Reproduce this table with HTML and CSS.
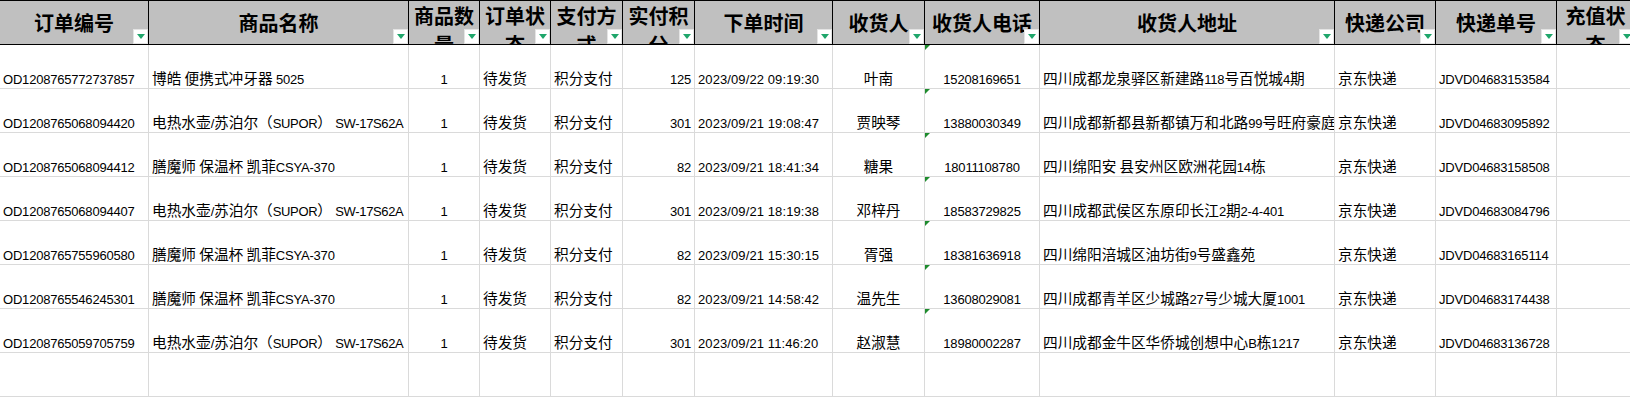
FILE: index.html
```html
<!DOCTYPE html>
<html lang="zh-CN">
<head>
<meta charset="utf-8">
<title>订单列表</title>
<link rel="stylesheet" href="styles.css">
</head>
<body>
<div class="sheet">
  <div class="grid">
    <div class="h">订单编号<span class="filter"><svg width="8" height="5" viewBox="0 0 8 5"><polygon points="0,0 8,0 4,5" /></svg></span></div>
    <div class="h">商品名称<span class="filter"><svg width="8" height="5" viewBox="0 0 8 5"><polygon points="0,0 8,0 4,5" /></svg></span></div>
    <div class="h wrap">商品数量<span class="filter"><svg width="8" height="5" viewBox="0 0 8 5"><polygon points="0,0 8,0 4,5" /></svg></span></div>
    <div class="h wrap">订单状态<span class="filter"><svg width="8" height="5" viewBox="0 0 8 5"><polygon points="0,0 8,0 4,5" /></svg></span></div>
    <div class="h wrap">支付方式<span class="filter"><svg width="8" height="5" viewBox="0 0 8 5"><polygon points="0,0 8,0 4,5" /></svg></span></div>
    <div class="h wrap">实付积分<span class="filter"><svg width="8" height="5" viewBox="0 0 8 5"><polygon points="0,0 8,0 4,5" /></svg></span></div>
    <div class="h">下单时间<span class="filter"><svg width="8" height="5" viewBox="0 0 8 5"><polygon points="0,0 8,0 4,5" /></svg></span></div>
    <div class="h">收货人<span class="filter"><svg width="8" height="5" viewBox="0 0 8 5"><polygon points="0,0 8,0 4,5" /></svg></span></div>
    <div class="h">收货人电话<span class="filter"><svg width="8" height="5" viewBox="0 0 8 5"><polygon points="0,0 8,0 4,5" /></svg></span></div>
    <div class="h">收货人地址<span class="filter"><svg width="8" height="5" viewBox="0 0 8 5"><polygon points="0,0 8,0 4,5" /></svg></span></div>
    <div class="h">快递公司<span class="filter"><svg width="8" height="5" viewBox="0 0 8 5"><polygon points="0,0 8,0 4,5" /></svg></span></div>
    <div class="h">快递单号<span class="filter"><svg width="8" height="5" viewBox="0 0 8 5"><polygon points="0,0 8,0 4,5" /></svg></span></div>
    <div class="h wrap">充值状态<span class="filter"><svg width="8" height="5" viewBox="0 0 8 5"><polygon points="0,0 8,0 4,5" /></svg></span></div>

    <div class="c">OD1208765772737857</div>
    <div class="c"><span class="z">博皓 便携式冲牙器</span> 5025</div>
    <div class="c ctr">1</div>
    <div class="c"><span class="z">待发货</span></div>
    <div class="c"><span class="z">积分支付</span></div>
    <div class="c r">125</div>
    <div class="c dt">2023/09/22 09:19:30</div>
    <div class="c ctr"><span class="z">叶南</span></div>
    <div class="c ctr"><span class="mark"></span>15208169651</div>
    <div class="c"><span class="z">四川成都龙泉驿区新建路</span>118<span class="z">号百悦城</span>4<span class="z">期</span></div>
    <div class="c"><span class="z">京东快递</span></div>
    <div class="c">JDVD04683153584</div>
    <div class="c"></div>

    <div class="c">OD1208765068094420</div>
    <div class="c"><span class="z">电热水壶</span>/<span class="z">苏泊尔（</span><span class="tight">SUPOR</span><span class="z">）</span> <span class="tight">SW-17S62A</span></div>
    <div class="c ctr">1</div>
    <div class="c"><span class="z">待发货</span></div>
    <div class="c"><span class="z">积分支付</span></div>
    <div class="c r">301</div>
    <div class="c dt">2023/09/21 19:08:47</div>
    <div class="c ctr"><span class="z">贾映琴</span></div>
    <div class="c ctr"><span class="mark"></span>13880030349</div>
    <div class="c"><span class="z">四川成都新都县新都镇万和北路</span>99<span class="z">号旺府豪庭</span></div>
    <div class="c"><span class="z">京东快递</span></div>
    <div class="c">JDVD04683095892</div>
    <div class="c"></div>

    <div class="c">OD1208765068094412</div>
    <div class="c"><span class="z">膳魔师 保温杯 凯菲</span>CSYA-370</div>
    <div class="c ctr">1</div>
    <div class="c"><span class="z">待发货</span></div>
    <div class="c"><span class="z">积分支付</span></div>
    <div class="c r">82</div>
    <div class="c dt">2023/09/21 18:41:34</div>
    <div class="c ctr"><span class="z">糖果</span></div>
    <div class="c ctr"><span class="mark"></span>18011108780</div>
    <div class="c"><span class="z">四川绵阳安 县安州区欧洲花园</span>14<span class="z">栋</span></div>
    <div class="c"><span class="z">京东快递</span></div>
    <div class="c">JDVD04683158508</div>
    <div class="c"></div>

    <div class="c">OD1208765068094407</div>
    <div class="c"><span class="z">电热水壶</span>/<span class="z">苏泊尔（</span><span class="tight">SUPOR</span><span class="z">）</span> <span class="tight">SW-17S62A</span></div>
    <div class="c ctr">1</div>
    <div class="c"><span class="z">待发货</span></div>
    <div class="c"><span class="z">积分支付</span></div>
    <div class="c r">301</div>
    <div class="c dt">2023/09/21 18:19:38</div>
    <div class="c ctr"><span class="z">邓梓丹</span></div>
    <div class="c ctr"><span class="mark"></span>18583729825</div>
    <div class="c"><span class="z">四川成都武侯区东原印长江</span>2<span class="z">期</span>2-4-401</div>
    <div class="c"><span class="z">京东快递</span></div>
    <div class="c">JDVD04683084796</div>
    <div class="c"></div>

    <div class="c">OD1208765755960580</div>
    <div class="c"><span class="z">膳魔师 保温杯 凯菲</span>CSYA-370</div>
    <div class="c ctr">1</div>
    <div class="c"><span class="z">待发货</span></div>
    <div class="c"><span class="z">积分支付</span></div>
    <div class="c r">82</div>
    <div class="c dt">2023/09/21 15:30:15</div>
    <div class="c ctr"><span class="z">胥强</span></div>
    <div class="c ctr"><span class="mark"></span>18381636918</div>
    <div class="c"><span class="z">四川绵阳涪城区油坊街</span>9<span class="z">号盛鑫苑</span></div>
    <div class="c"><span class="z">京东快递</span></div>
    <div class="c">JDVD04683165114</div>
    <div class="c"></div>

    <div class="c">OD1208765546245301</div>
    <div class="c"><span class="z">膳魔师 保温杯 凯菲</span>CSYA-370</div>
    <div class="c ctr">1</div>
    <div class="c"><span class="z">待发货</span></div>
    <div class="c"><span class="z">积分支付</span></div>
    <div class="c r">82</div>
    <div class="c dt">2023/09/21 14:58:42</div>
    <div class="c ctr"><span class="z">温先生</span></div>
    <div class="c ctr"><span class="mark"></span>13608029081</div>
    <div class="c"><span class="z">四川成都青羊区少城路</span>27<span class="z">号少城大厦</span>1001</div>
    <div class="c"><span class="z">京东快递</span></div>
    <div class="c">JDVD04683174438</div>
    <div class="c"></div>

    <div class="c">OD1208765059705759</div>
    <div class="c"><span class="z">电热水壶</span>/<span class="z">苏泊尔（</span><span class="tight">SUPOR</span><span class="z">）</span> <span class="tight">SW-17S62A</span></div>
    <div class="c ctr">1</div>
    <div class="c"><span class="z">待发货</span></div>
    <div class="c"><span class="z">积分支付</span></div>
    <div class="c r">301</div>
    <div class="c dt">2023/09/21 11:46:20</div>
    <div class="c ctr"><span class="z">赵淑慧</span></div>
    <div class="c ctr"><span class="mark"></span>18980002287</div>
    <div class="c"><span class="z">四川成都金牛区华侨城创想中心</span>B<span class="z">栋</span>1217</div>
    <div class="c"><span class="z">京东快递</span></div>
    <div class="c">JDVD04683136728</div>
    <div class="c"></div>

    <div class="c"></div>
    <div class="c"></div>
    <div class="c"></div>
    <div class="c"></div>
    <div class="c"></div>
    <div class="c"></div>
    <div class="c"></div>
    <div class="c"></div>
    <div class="c"></div>
    <div class="c"></div>
    <div class="c"></div>
    <div class="c"></div>
    <div class="c"></div>
  </div>
</div>
</body>
</html>
```

FILE: styles.css
```css
html, body {
  margin: 0;
  padding: 0;
  background: #ffffff;
}

.sheet {
  width: 1630px;
  height: 397px;
  overflow: hidden;
}

.grid {
  display: grid;
  grid-template-columns: 149px 260px 71px 71px 72px 72px 138px 92px 115px 295px 101px 121px 78px;
  grid-template-rows: 45px repeat(8, 44px);
  width: max-content;
}

.h {
  position: relative;
  box-sizing: border-box;
  background: #c0c0c0;
  border-top: 1px solid #000;
  border-bottom: 1px solid #000;
  border-right: 1px solid #000;
  font-family: "Noto Sans CJK SC", sans-serif;
  font-weight: 700;
  font-size: 20px;
  line-height: 29px;
  color: #000;
  text-align: center;
  padding: 7px 1px 0;
  overflow: hidden;
}

.h.wrap {
  padding-top: 0;
}

.filter {
  position: absolute;
  right: 0;
  bottom: 0;
  width: 15px;
  height: 15px;
  box-sizing: border-box;
  background: #fff;
  border: 1px solid #e4e4e4;
  display: flex;
  align-items: center;
  justify-content: center;
}

.filter svg {
  display: block;
  fill: #1fa66b;
}

.c {
  position: relative;
  box-sizing: border-box;
  border-right: 1px solid #dadada;
  border-bottom: 1px solid #dadada;
  font-family: "Liberation Sans", "Noto Sans CJK SC", sans-serif;
  font-size: 13px;
  letter-spacing: -0.2px;
  line-height: 20px;
  color: #000;
  padding: 25px 3px 0;
  text-align: left;
  white-space: nowrap;
  overflow: hidden;
}

.c.dt {
  letter-spacing: 0.1px;
}

.c.ctr {
  text-align: center;
}

.c.r {
  text-align: right;
}

.z {
  font-family: "Noto Sans CJK SC", sans-serif;
  font-size: 14.67px;
  letter-spacing: 0;
  line-height: 16px;
}

.tight {
  letter-spacing: -0.35px;
}

.mark {
  position: absolute;
  left: 0;
  top: 0;
  width: 0;
  height: 0;
  border-top: 5px solid #1e8c2e;
  border-right: 5px solid transparent;
}
```
